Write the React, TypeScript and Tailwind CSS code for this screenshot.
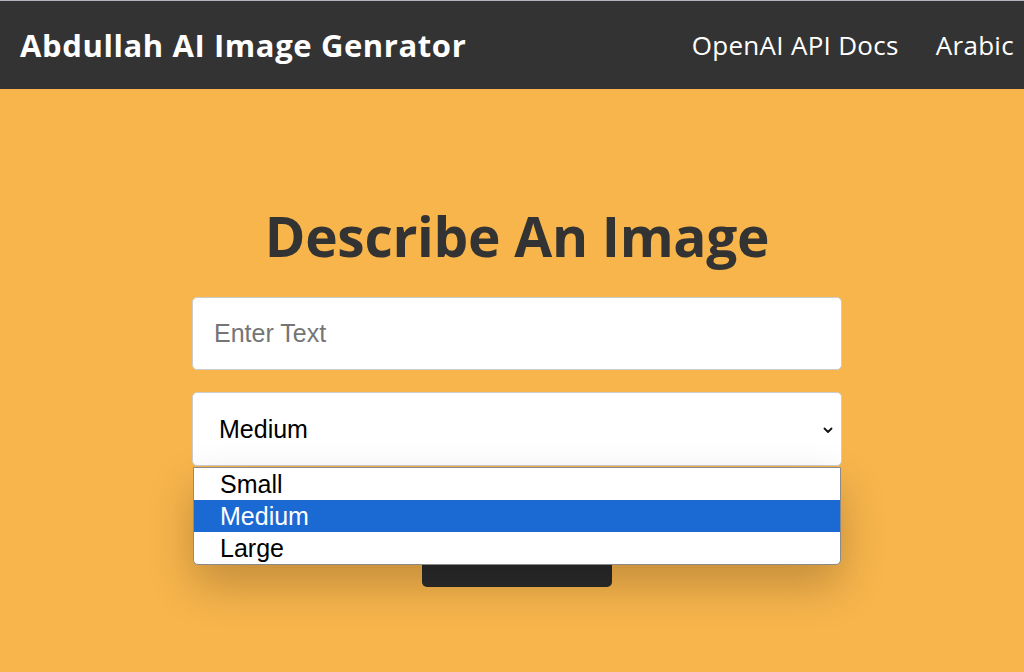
import React from "react";

export default function App() {
  return (
    <div className="w-[1024px] h-[672px] overflow-hidden bg-[#f8b54c] relative" style={{ fontFamily: '"Open Sans", "Noto Sans", sans-serif' }}>
      <header className="h-[89px] border-t border-[#b4b4bd] bg-[#333333] flex items-center justify-between pl-5 pr-[10px]">
        <div className="text-white font-bold text-[31px] tracking-[0.6px] leading-none">Abdullah AI Image Genrator</div>
        <nav className="flex items-center gap-[37px] text-white text-[26px] tracking-[0.3px] leading-none">
          <span>OpenAI API Docs</span>
          <span>Arabic</span>
        </nav>
      </header>
      <main className="flex flex-col items-center pl-[10px]">
        <h1 className="mt-[111px] text-[#333333] font-bold text-[55px] leading-[72px] tracking-[-0.3px]">Describe An Image</h1>
        <div className="mt-[25px] w-[650px] flex flex-col items-center relative">
          <div className="w-full h-[73px] bg-white border border-[#cccccc] rounded-[5px] flex items-center pl-[21px]" style={{ fontFamily: '"Liberation Sans", Arial, sans-serif' }}>
            <span className="text-[#757575] text-[25px]">Enter Text</span>
          </div>
          <div className="mt-[22px] w-full h-[74px] bg-white border border-[#cccccc] rounded-[5px] flex items-center justify-between pl-[26px] pr-[6px]" style={{ fontFamily: '"Liberation Sans", Arial, sans-serif' }}>
            <span className="text-black text-[25px] mt-[2px]">Medium</span>
            <svg width="12" height="12" viewBox="0 0 12 12" className="mr-[1px] mt-[2px]">
              <path d="M2.5 4.5 L6 8 L9.5 4.5" fill="none" stroke="#111" strokeWidth="1.8" strokeLinecap="round" strokeLinejoin="round" />
            </svg>
          </div>
          <button className="mt-[62px] w-[190px] h-[59px] bg-[#2b2b2b] rounded-[5px]" />
          <div
            className="absolute left-[1px] right-[1px] top-[170px] bg-white border border-[#8a8a8a] rounded-b-[5px] overflow-hidden shadow-[0_20px_45px_rgba(0,0,0,0.22)] text-[25px] leading-[32px]"
            style={{ fontFamily: '"Liberation Sans", Arial, sans-serif' }}
          >
            <div className="h-[32px] pl-[26px] text-black">Small</div>
            <div className="h-[32px] pl-[26px] text-white bg-[#1b69d3]">Medium</div>
            <div className="h-[32px] pl-[26px] text-black">Large</div>
          </div>
        </div>
      </main>
    </div>
  );
}
